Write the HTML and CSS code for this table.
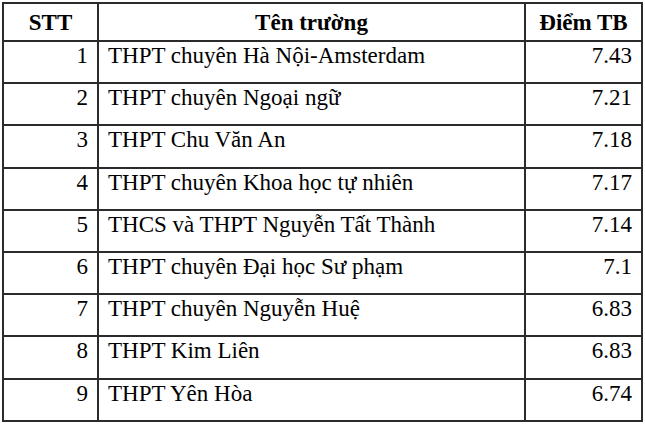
FILE: index.html
```html
<!DOCTYPE html>
<html lang="vi">
<head>
<meta charset="utf-8">
<title>Điểm TB</title>
<link rel="stylesheet" href="styles.css">
</head>
<body>
<table class="scores">
  <colgroup>
    <col class="c-stt">
    <col class="c-name">
    <col class="c-score">
  </colgroup>
  <thead>
    <tr><th>STT</th><th>Tên trường</th><th>Điểm TB</th></tr>
  </thead>
  <tbody>
    <tr><td class="num">1</td><td>THPT chuyên Hà Nội-Amsterdam</td><td class="num">7.43</td></tr>
    <tr><td class="num">2</td><td>THPT chuyên Ngoại ngữ</td><td class="num">7.21</td></tr>
    <tr><td class="num">3</td><td>THPT Chu Văn An</td><td class="num">7.18</td></tr>
    <tr><td class="num">4</td><td>THPT chuyên Khoa học tự nhiên</td><td class="num">7.17</td></tr>
    <tr><td class="num">5</td><td>THCS và THPT Nguyễn Tất Thành</td><td class="num">7.14</td></tr>
    <tr><td class="num">6</td><td>THPT chuyên Đại học Sư phạm</td><td class="num">7.1</td></tr>
    <tr><td class="num">7</td><td>THPT chuyên Nguyễn Huệ</td><td class="num">6.83</td></tr>
    <tr><td class="num">8</td><td>THPT Kim Liên</td><td class="num">6.83</td></tr>
    <tr><td class="num">9</td><td>THPT Yên Hòa</td><td class="num">6.74</td></tr>
  </tbody>
</table>
</body>
</html>
```

FILE: styles.css
```css
html, body {
  margin: 0;
  background: #fff;
}
body {
  padding: 2px 4px 0 2px;
  font-family: "Liberation Serif", "Times New Roman", serif;
  color: #000;
}
.scores {
  border-collapse: collapse;
  width: 639px;
  table-layout: fixed;
  font-size: 23px;
}
.c-stt { width: 95px; }
.c-name { width: 427px; }
.c-score { width: 117px; }
.scores th,
.scores td {
  border: 2px solid #2b2b2b;
  padding: 0 9px;
  white-space: nowrap;
}
.scores th {
  height: 35px;
  font-weight: bold;
  text-align: center;
  vertical-align: middle;
  padding-top: 1px;
}
.scores td {
  height: 39.2px;
  vertical-align: top;
  padding-top: 1px;
  text-align: left;
}
.scores td.num {
  text-align: right;
}
```
